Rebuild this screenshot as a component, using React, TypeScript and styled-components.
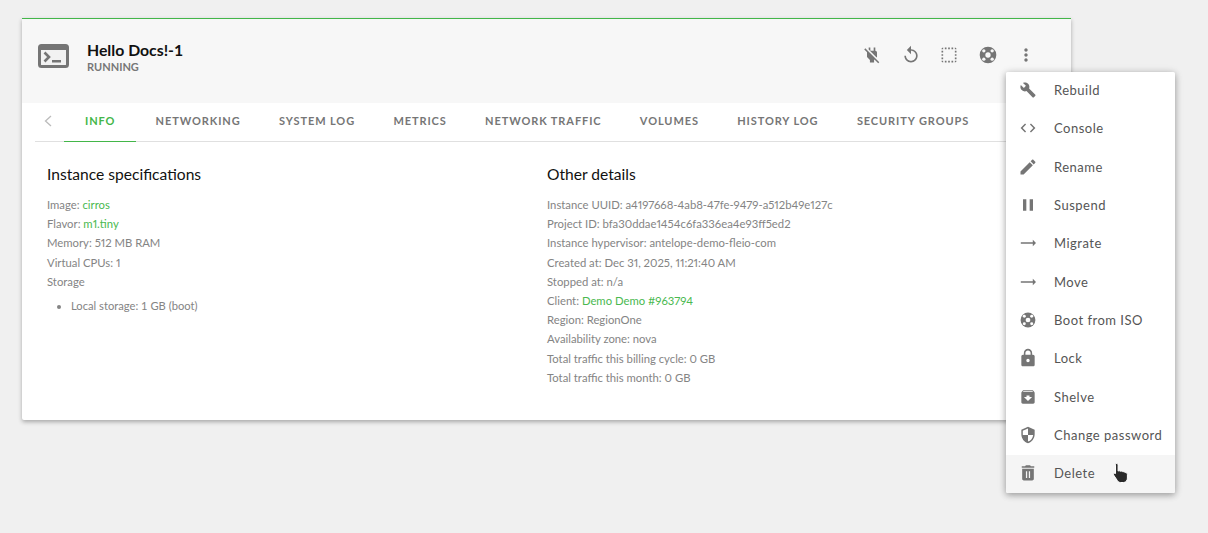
import * as React from 'react';
import styled, { createGlobalStyle } from 'styled-components';

const GlobalStyle = createGlobalStyle`
    html, body {
        margin: 0;
        height: 100%;
        background: #f0f0f0;
        font-family: Lato, "Liberation Sans", sans-serif;
    }
`
const Page = styled.div`
    position: relative;
    width: 1208px;
    height: 533px;
    padding: 18px 137px 0 22px;
    box-sizing: border-box;
    overflow: hidden;
`
const Card = styled.div`
    background: #fff;
    border-top: 1px solid #43b649;
    height: 402px;
    box-sizing: border-box;
    border-radius: 0 0 2px 2px;
    box-shadow: 0 2px 4px rgba(0, 0, 0, 0.3);
`
const Header = styled.div`
    height: 84px;
    background: #f7f7f7;
    display: flex;
    align-items: flex-start;
    padding: 21px 35px 0 16px;
    box-sizing: border-box;
`
const TerminalIcon = styled.svg`
    margin-top: 4px;
    flex: none;
`
const TitleBlock = styled.div`
    margin-left: 18px;
    flex: 1;
`
const Title = styled.h1`
    margin: 0;
    font-size: 15.8px;
    font-weight: 700;
    line-height: 20px;
    color: #111;
`
const Status = styled.div`
    font-size: 11px;
    font-weight: 700;
    line-height: 14px;
    color: #777;
`
const Actions = styled.div`
    display: flex;
    gap: 18.4px;
    margin-top: 5px;
`
const Tabs = styled.div`
    height: 39px;
    margin: 0 13px;
    display: flex;
    align-items: stretch;
    border-bottom: 1px solid #e0e0e0;
    box-sizing: border-box;
`
const Chevron = styled.div`
    width: 29px;
    display: flex;
    align-items: center;
    color: #bbb;
    padding: 0 0 3px 9px;
    box-sizing: border-box;
`
const Tab = styled.div<{ $active?: boolean }>`
    padding: 0 ${p => (p.$active ? '21px' : '19.2px')} 4px;
    display: flex;
    align-items: center;
    font-size: 11px;
    font-weight: 700;
    letter-spacing: 0.9px;
    white-space: nowrap;
    margin-bottom: -1px;
    color: ${p => (p.$active ? '#43b649' : '#767676')};
    border-bottom: 1px solid ${p => (p.$active ? '#43b649' : 'transparent')};
`
const Columns = styled.div`
    display: grid;
    grid-template-columns: 500px 1fr;
    padding: 22px 25px 0;
`
const Heading = styled.h2`
    margin: 0 0 11px;
    font-size: 15.6px;
    font-weight: 400;
    line-height: 20px;
    color: #111;
`
const Line = styled.div`
    font-size: 11.3px;
    font-variant-numeric: proportional-nums;
    line-height: 19.2px;
    color: #848484;
    white-space: nowrap;
`
const Green = styled.span`
    color: #4ab950;
`
const StorageList = styled.ul`
    margin: 5px 0 0;
    padding: 0 0 0 24px;
    font-size: 11.2px;
    line-height: 19.2px;
    color: #848484;
`
const Menu = styled.div`
    position: absolute;
    left: 1006px;
    top: 72px;
    width: 169px;
    height: 421px;
    background: #fff;
    border-radius: 2px;
    overflow: hidden;
`
const MenuShadow = styled.div`
    position: absolute;
    left: 1006px;
    top: 72px;
    width: 169px;
    height: 421px;
    border-radius: 2px;
    box-shadow: 0 2px 6px rgba(0, 0, 0, 0.28), 0 1px 10px rgba(0, 0, 0, 0.14);
`
const MenuItem = styled.div<{ $hover?: boolean }>`
    position: relative;
    height: 38.3px;
    display: flex;
    align-items: center;
    padding: 0 0 2px 12px;
    box-sizing: border-box;
    background: ${p => (p.$hover ? '#f5f5f5' : 'transparent')};
`
const MenuLabel = styled.span`
    margin-left: 16px;
    font-size: 13px;
    letter-spacing: 0.5px;
    color: #555;
`
const Cursor = styled.svg`
    position: absolute;
    left: 106px;
    top: 7px;
`
const Icon = ({ d, box = 24 }: { d: string; box?: number }) => {
    const o = (24 - box) / 2
    return (
        <svg width={20} height={20} viewBox={`${o} ${o} ${box} ${box}`} fill="#757575">
            <path d={d} />
        </svg>
    )
}
const Lifebuoy = ({ box = 24, hole = '#fff' }: { box?: number; hole?: string }) => {
    const o = (24 - box) / 2
    return (
        <svg width={20} height={20} viewBox={`${o} ${o} ${box} ${box}`}>
            <circle cx="12" cy="12" r="10" fill="#757575" />
            <circle cx="12" cy="12" r="3.2" fill={hole} />
            <g fill={hole}>
                <circle cx="7" cy="7" r="2" />
                <circle cx="17" cy="7" r="2" />
                <circle cx="7" cy="17" r="2" />
                <circle cx="17" cy="17" r="2" />
            </g>
        </svg>
    )
}

const paths = {
    plugOff: 'M18 14.49V9c0-1-1.01-2.01-2-2V3h-2v4h-4V3H8v2.48l9.51 9.5.49-.49zm-1.76 1.77L7.2 7.2l-.01.01L3.98 4 2.71 5.25l3.36 3.36C6.04 8.74 6 8.87 6 9v5.48L9.5 18v3h5v-3l.48-.48L19.45 22l1.26-1.28-4.47-4.46z',
    replay: 'M12 5V1L7 6l5 5V7c3.31 0 6 2.69 6 6s-2.69 6-6 6-6-2.69-6-6H4c0 4.42 3.58 8 8 8s8-3.58 8-8-3.58-8-8-8z',
    select: 'M3 5h2V3c-1.1 0-2 .9-2 2zm0 8h2v-2H3v2zm4 8h2v-2H7v2zM3 9h2V7H3v2zm10-6h-2v2h2V3zm6 0v2h2c0-1.1-.9-2-2-2zM5 21v-2H3c0 1.1.9 2 2 2zm-2-4h2v-2H3v2zM9 3H7v2h2V3zm2 18h2v-2h-2v2zm8-8h2v-2h-2v2zm0 8c1.1 0 2-.9 2-2h-2v2zm0-12h2V7h-2v2zm0 8h2v-2h-2v2zm-4 4h2v-2h-2v2zm0-16h2V3h-2v2z',
    more: 'M12 8c1.1 0 2-.9 2-2s-.9-2-2-2-2 .9-2 2 .9 2 2 2zm0 2c-1.1 0-2 .9-2 2s.9 2 2 2 2-.9 2-2-.9-2-2-2zm0 6c-1.1 0-2 .9-2 2s.9 2 2 2 2-.9 2-2-.9-2-2-2z',
    wrench: 'M22.7 19l-9.1-9.1c.9-2.3.4-5-1.5-6.9-2-2-5-2.4-7.4-1.3L9 6 6 9 1.6 4.7C.4 7.1.9 10.1 2.9 12.1c1.9 1.9 4.6 2.4 6.9 1.5l9.1 9.1c.4.4 1 .4 1.4 0l2.3-2.3c.5-.4.5-1.1.1-1.4z',
    code: 'M9.4 16.6L4.8 12l4.6-4.6L8 6l-6 6 6 6 1.4-1.4zm5.2 0l4.6-4.6-4.6-4.6L16 6l6 6-6 6-1.4-1.4z',
    edit: 'M3 17.25V21h3.75L17.81 9.94l-3.75-3.75L3 17.25zM20.71 7.04c.39-.39.39-1.02 0-1.41l-2.34-2.34c-.39-.39-1.02-.39-1.41 0l-1.83 1.83 3.75 3.75 1.83-1.83z',
    pause: 'M6 19h4V5H6v14zm8-14v14h4V5h-4z',
    arrow: 'M22 12l-4-4v3H3v2h15v3z',
    lock: 'M18 8h-1V6c0-2.76-2.24-5-5-5S7 3.24 7 6v2H6c-1.1 0-2 .9-2 2v10c0 1.1.9 2 2 2h12c1.1 0 2-.9 2-2V10c0-1.1-.9-2-2-2zm-6 9c-1.1 0-2-.9-2-2s.9-2 2-2 2 .9 2 2-.9 2-2 2zm3.1-9H8.9V6c0-1.71 1.39-3.1 3.1-3.1 1.71 0 3.1 1.39 3.1 3.1v2z',
    shelve: 'M20.54 5.23l-1.39-1.68C18.88 3.21 18.47 3 18 3H6c-.47 0-.88.21-1.16.55L3.46 5.23C3.17 5.57 3 6.02 3 6.5V19c0 1.1.9 2 2 2h14c1.1 0 2-.9 2-2V6.5c0-.48-.17-.93-.46-1.27zM12 17.5L6.5 12H10v-2h4v2h3.5L12 17.5zM5.12 5l.81-1h12l.94 1H5.12z',
    shield: 'M12 1L3 5v6c0 5.55 3.84 10.74 9 12 5.16-1.26 9-6.45 9-12V5l-9-4zm0 10.99h7c-.53 4.12-3.28 7.79-7 8.94V12H5V6.3l7-3.11v8.8z',
    trash: 'M5 7v12c0 1.1.9 2 2 2h10c1.1 0 2-.9 2-2V7H5zm4.5 3h1.5v8H9.5v-8zm3.5 0h1.5v8H13v-8zM19.5 3.8H15.5l-1-1h-5l-1 1H4.5v2h15v-2z',
}

const tabs = ['Networking', 'System log', 'Metrics', 'Network traffic', 'Volumes', 'History log', 'Security groups']
const menu: { label: string; icon: keyof typeof paths | 'buoy'; box?: number }[] = [
    { label: 'Rebuild', icon: 'wrench', box: 29 },
    { label: 'Console', icon: 'code', box: 27 },
    { label: 'Rename', icon: 'edit' },
    { label: 'Suspend', icon: 'pause' },
    { label: 'Migrate', icon: 'arrow', box: 25 },
    { label: 'Move', icon: 'arrow', box: 25 },
    { label: 'Boot from ISO', icon: 'buoy', box: 27 },
    { label: 'Lock', icon: 'lock' },
    { label: 'Shelve', icon: 'shelve', box: 27 },
    { label: 'Change password', icon: 'shield', box: 27 },
    { label: 'Delete', icon: 'trash' },
]
const details = [
    'Instance UUID: a4197668-4ab8-47fe-9479-a512b49e127c',
    'Project ID: bfa30ddae1454c6fa336ea4e93ff5ed2',
    'Instance hypervisor: antelope-demo-fleio-com',
    'Created at: Dec 31, 2025, 11:21:40 AM',
    'Stopped at: n/a',
]
const details2 = [
    'Region: RegionOne',
    'Availability zone: nova',
    'Total traffic this billing cycle: 0 GB',
    'Total traffic this month: 0 GB',
]

export default function App() {
    return (
        <Page>
            <GlobalStyle />
            <Card>
                <Header>
                    <TerminalIcon width="31" height="24" viewBox="0 0 31 24">
                        <rect x="1.5" y="1.5" width="28" height="21" rx="2" fill="#f2f2f2" stroke="#757575" strokeWidth="3" />
                        <rect x="1" y="1" width="29" height="5" fill="#757575" />
                        <path d="M6.5 8.5l4.5 4.5-4.5 4.5" fill="none" stroke="#757575" strokeWidth="2.6" />
                        <rect x="14" y="16" width="9" height="2.5" fill="#757575" />
                    </TerminalIcon>
                    <TitleBlock>
                        <Title>Hello Docs!-1</Title>
                        <Status>RUNNING</Status>
                    </TitleBlock>
                    <Actions>
                        <Icon d={paths.plugOff} />
                        <Icon d={paths.replay} />
                        <Icon d={paths.select} />
                        <Lifebuoy hole="#f7f7f7" />
                        <Icon d={paths.more} />
                    </Actions>
                </Header>
                <Tabs>
                    <Chevron>
                        <svg width="8" height="12" viewBox="0 0 8 12">
                            <path d="M7 1L1.5 6 7 11" fill="none" stroke="currentColor" strokeWidth="1.3" />
                        </svg>
                    </Chevron>
                    <Tab $active>INFO</Tab>
                    {tabs.map(t => <Tab key={t}>{t.toUpperCase()}</Tab>)}
                </Tabs>
                <Columns>
                    <div>
                        <Heading>Instance specifications</Heading>
                        <Line>Image: <Green>cirros</Green></Line>
                        <Line>Flavor: <Green>m1.tiny</Green></Line>
                        <Line>Memory: 512 MB RAM</Line>
                        <Line>Virtual CPUs: 1</Line>
                        <Line>Storage</Line>
                        <StorageList>
                            <li>Local storage: 1 GB (boot)</li>
                        </StorageList>
                    </div>
                    <div>
                        <Heading>Other details</Heading>
                        {details.map(l => <Line key={l}>{l}</Line>)}
                        <Line>Client: <Green>Demo Demo #963794</Green></Line>
                        {details2.map(l => <Line key={l}>{l}</Line>)}
                    </div>
                </Columns>
            </Card>
            <MenuShadow />
            <Menu>
                {menu.map(m => (
                    <MenuItem key={m.label} $hover={m.label === 'Delete'}>
                        {m.icon === 'buoy' ? <Lifebuoy box={m.box} /> : <Icon d={paths[m.icon]} box={m.box} />}
                        <MenuLabel>{m.label}</MenuLabel>
                        {m.label === 'Delete' && (
                            <Cursor width="18" height="22" viewBox="0 0 18 22">
                                <path d="M4.5 1.5c1 0 1.6.7 1.6 1.6v6c.4-.4 2-.5 2.4.2.5-.3 1.9-.3 2.3.5.6-.3 2-.1 2.4.8.3-.1 2.2 0 2.2 2v3.5c0 2.2-1.4 4.4-3.8 4.4H8.5c-1.4 0-2.4-.9-3.2-2L1.6 13c-.6-1.1.6-2.3 1.9-1.4v-8.5c0-.9.1-1.6 1-1.6z" fill="#2a2a2a" stroke="#fff" strokeWidth="1" />
                            </Cursor>
                        )}
                    </MenuItem>
                ))}
            </Menu>
        </Page>
    )
}
